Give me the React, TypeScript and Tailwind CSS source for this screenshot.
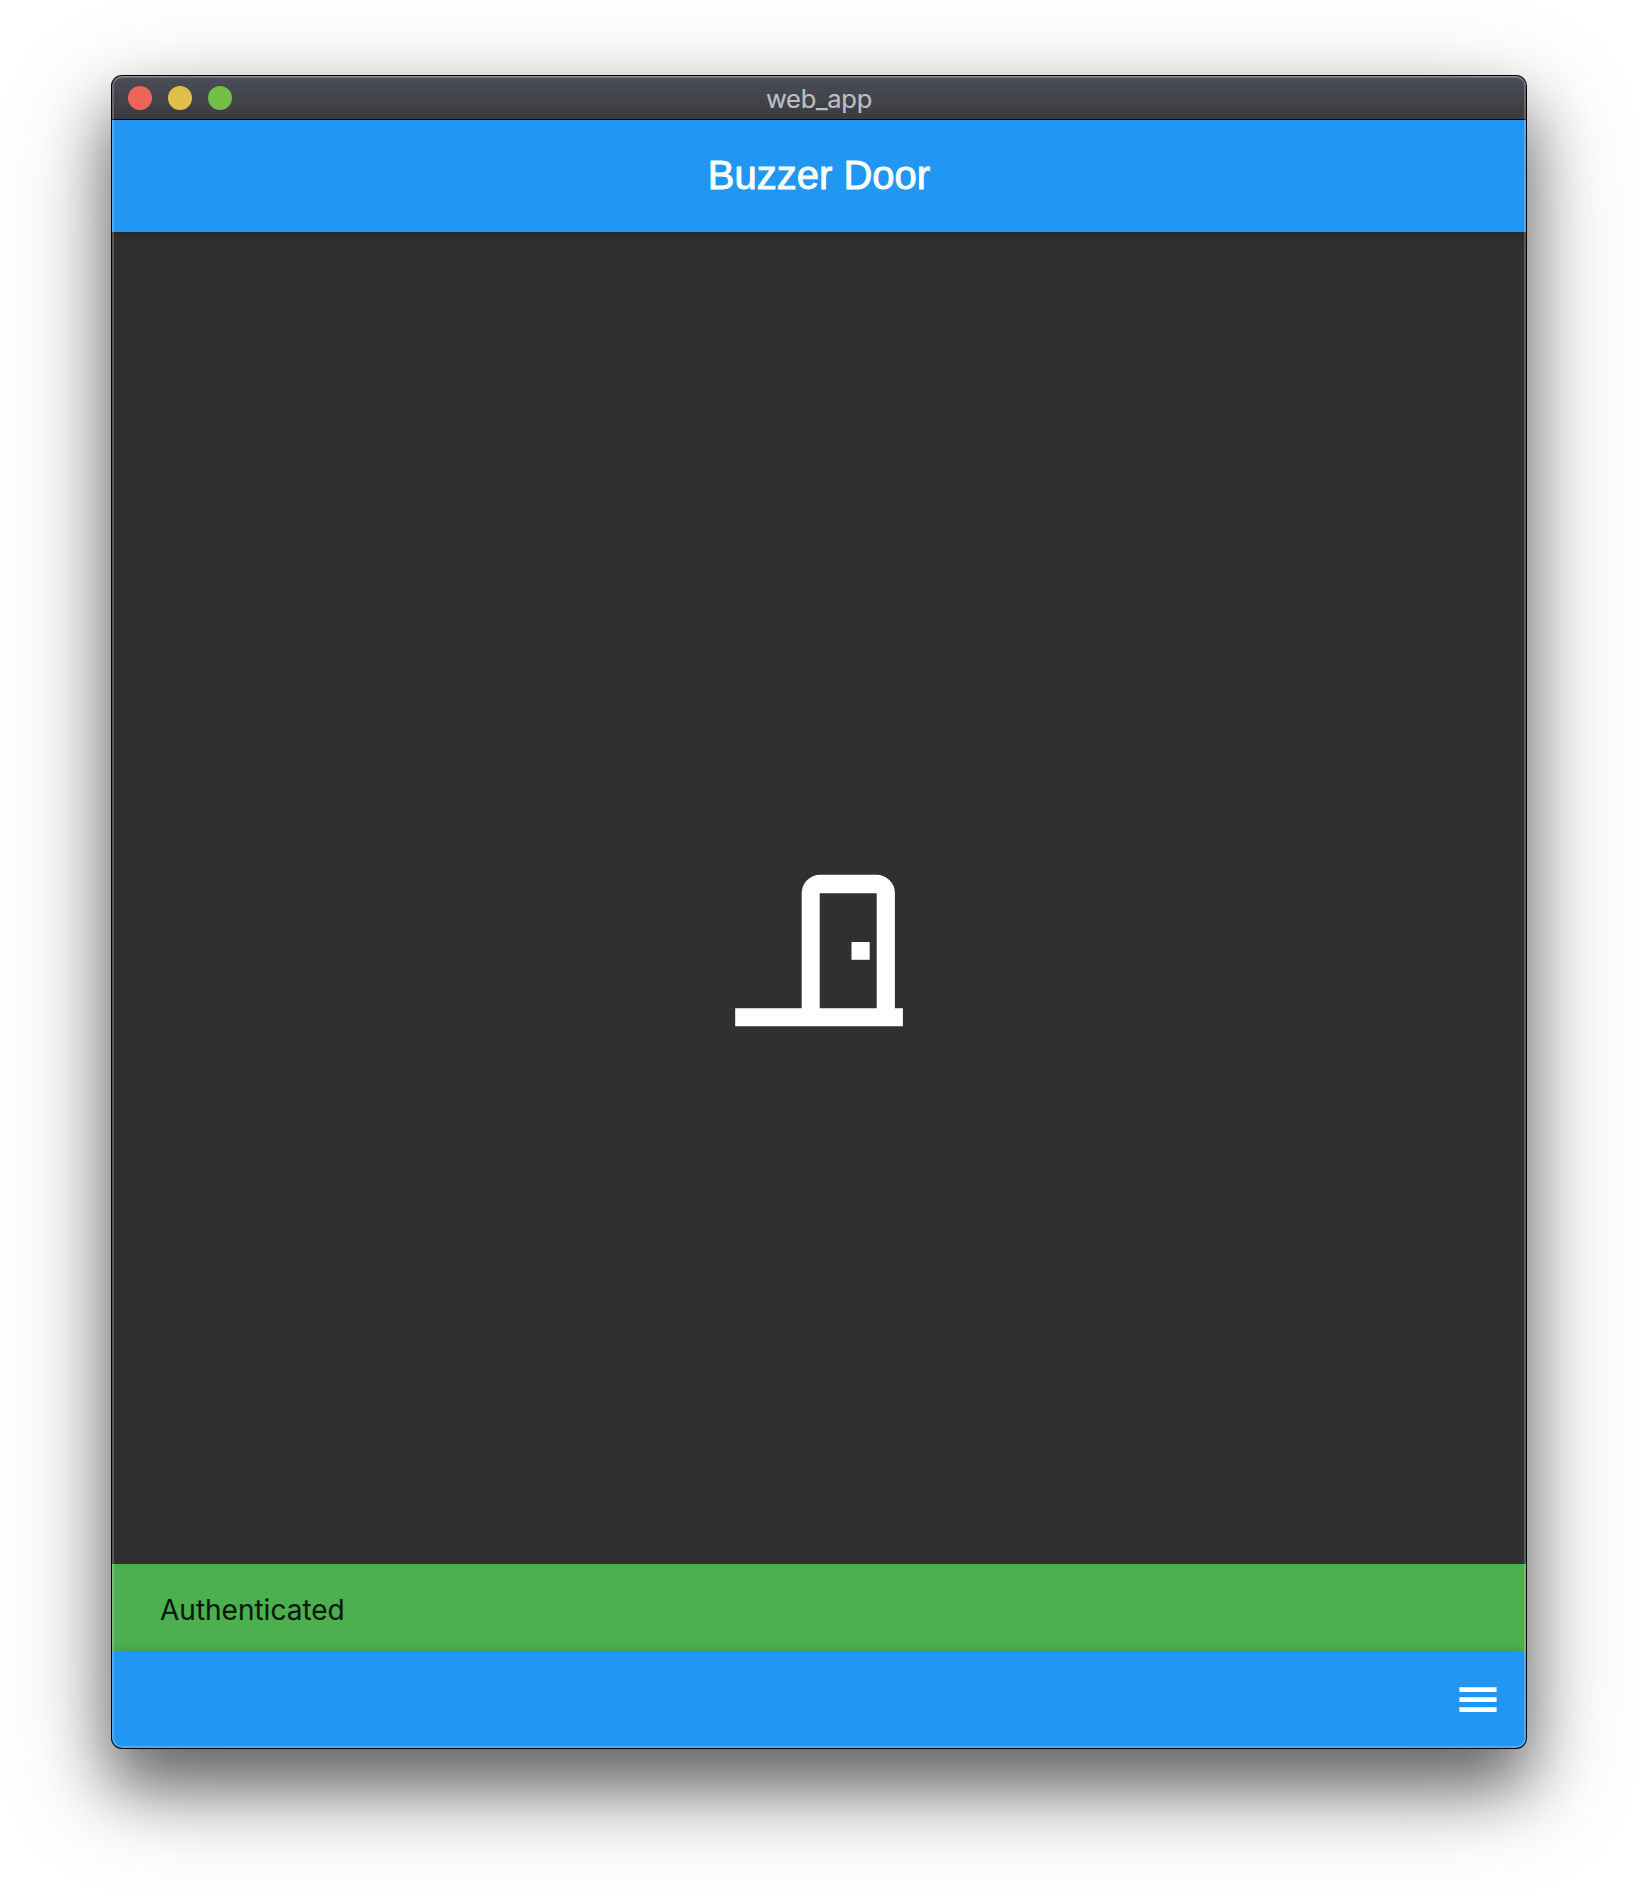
function MeetingRoomIcon() {
  return (
    <svg width="200" height="200" viewBox="0 0 200 200" fill="#fff" aria-label="Door">
      <path
        fillRule="evenodd"
        d="M15.2 148.3H81.7V33A18.2 18.2 0 0 1 99.9 14.8H156.7A18.2 18.2 0 0 1 174.9 33V148.3H182.9V166.3H15.2ZM99.7 33.2V148.3H156.7V33.2Z"
      />
      <rect x="131.5" y="82" width="18.2" height="17.8" />
    </svg>
  );
}

function MenuIcon() {
  return (
    <svg width="50" height="50" viewBox="0 0 50 50" fill="#fff" aria-label="Menu">
      <path d="M6.4 12.2h37.2v4.8H6.4zM6.4 22.2h37.2v4.8H6.4zM6.4 32.2h37.2v4.8H6.4z" />
    </svg>
  );
}

export default function App() {
  return (
    <div className="h-[1896px] w-[1638px] overflow-hidden bg-white pt-[75px] pl-[111px]">
      <div className="relative flex h-[1674px] w-[1416px] flex-col rounded-[11px] bg-black p-px shadow-[0_36px_60px_rgba(0,0,0,0.43),0_36px_104px_rgba(0,0,0,0.35)]">
        <div className="flex min-h-0 flex-1 flex-col overflow-hidden rounded-[10px]">
          <header className="grid h-[44px] shrink-0 grid-cols-[1fr_auto_1fr] items-center border-b border-black bg-linear-to-b from-[#4b4e57] to-[#3a3b3e]">
            <div className="flex gap-4 pl-4">
              <span className="size-6 rounded-full bg-[#ed655a]" />
              <span className="size-6 rounded-full bg-[#e0c04c]" />
              <span className="size-6 rounded-full bg-[#72be47]" />
            </div>
            <span className="pt-[3px] font-[Inter,sans-serif] text-[25.5px] leading-none tracking-[-0.3px] text-[#bdbec1] [-webkit-text-stroke:0.2px_#bdbec1]">
              web_app
            </span>
          </header>
          <div className="z-10 flex h-[112px] shrink-0 items-center justify-center bg-[#2196f3] pb-[2px] shadow-[0_4px_10px_rgba(0,0,0,0.2)]">
            <h1 className="font-['Liberation_Sans',Arial,sans-serif] text-[40px] leading-none font-normal text-white [-webkit-text-stroke:0.9px_white]">
              Buzzer Door
            </h1>
          </div>
          <main className="flex min-h-0 flex-1 justify-center bg-[#303030] pt-[628px] pl-[2px]">
            <MeetingRoomIcon />
          </main>
          <div className="flex h-[88px] shrink-0 items-center bg-[#4caf50] pt-1 pl-[48px]">
            <span className="font-[Inter,sans-serif] text-[28px] leading-none text-[#0a1a0b] [-webkit-text-stroke:0.1px_#0a1a0b]">
              Authenticated
            </span>
          </div>
          <footer className="z-10 flex h-[96px] shrink-0 items-start justify-end bg-[#2196f3] pt-[23px] pr-[23px] shadow-[0_-1px_8px_rgba(0,0,0,0.13)]">
            <MenuIcon />
          </footer>
        </div>
        <div className="pointer-events-none absolute inset-px z-20 rounded-[10px] border-2 border-white/20" />
        <div className="pointer-events-none absolute inset-x-px top-px z-20 h-[20px] rounded-t-[10px] border-t border-white/20" />
      </div>
    </div>
  );
}
